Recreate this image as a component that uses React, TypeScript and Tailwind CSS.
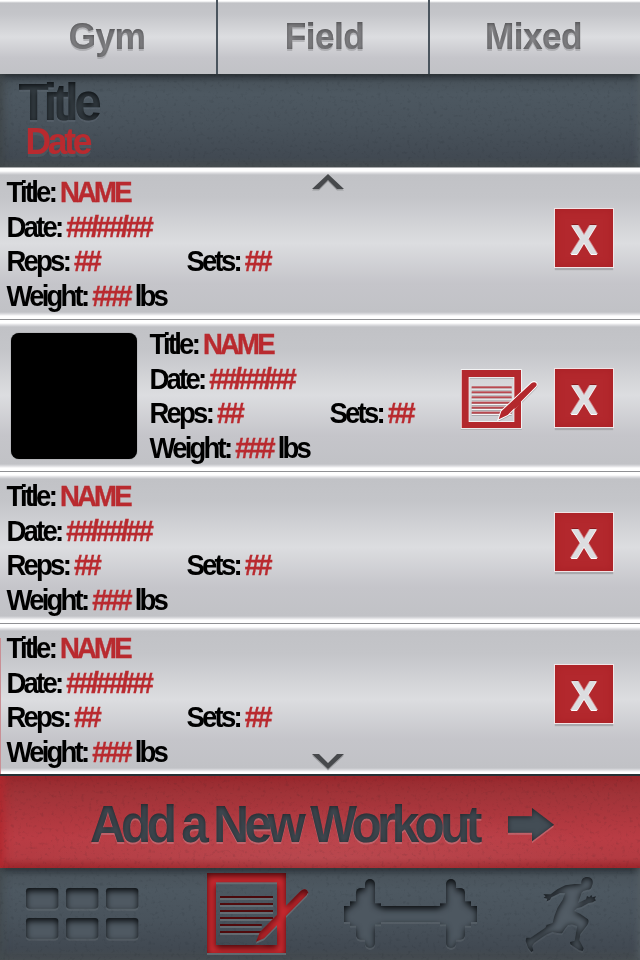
import React from "react";

type InsetProps = {
  id: string;
  dy: number;
  blur: number;
  shade: string;
  strength: number;
  light: string;
  lightAlpha: number;
};

// Pressed-in look: dark shade inside the upper edge, thin light lip below.
function Inset({ id, dy, blur, shade, strength, light, lightAlpha }: InsetProps) {
  return (
    <filter id={id} x="-10%" y="-10%" width="120%" height="125%" colorInterpolationFilters="sRGB">
      <feComponentTransfer in="SourceAlpha" result="inv">
        <feFuncA type="table" tableValues="1 0" />
      </feComponentTransfer>
      <feGaussianBlur in="inv" stdDeviation={blur} result="b" />
      <feOffset in="b" dy={dy} result="o" />
      <feFlood floodColor={shade} floodOpacity={strength} />
      <feComposite in2="o" operator="in" />
      <feComposite in2="SourceAlpha" operator="in" result="inner" />
      <feOffset in="SourceAlpha" dy="2" result="lo" />
      <feFlood floodColor={light} floodOpacity={lightAlpha} />
      <feComposite in2="lo" operator="in" result="lip" />
      <feMerge>
        <feMergeNode in="lip" />
        <feMergeNode in="SourceGraphic" />
        <feMergeNode in="inner" />
      </feMerge>
    </filter>
  );
}

function Filters() {
  return (
    <svg className="absolute h-0 w-0">
      <defs>
        <Inset id="press" dy={3} blur={3} shade="#0a0d10" strength={1} light="#7d8489" lightAlpha={0.25} />
        <Inset id="press-runner" dy={1} blur={3} shade="#0a0d10" strength={1} light="#7d8489" lightAlpha={0.15} />
        <Inset id="press-red" dy={3} blur={3} shade="#3a0508" strength={0.9} light="#6f777c" lightAlpha={0.7} />
        <Inset id="press-tab" dy={1} blur={2} shade="#3c3c3e" strength={0.85} light="#8f9093" lightAlpha={0.5} />
        <Inset id="press-title" dy={2} blur={2.5} shade="#0c1013" strength={1} light="#66707a" lightAlpha={0.35} />
        <Inset id="press-add" dy={1} blur={2.5} shade="#1c2024" strength={0.85} light="#c9858c" lightAlpha={0.5} />
      </defs>
    </svg>
  );
}

function Grain({ id }: { id: string }) {
  return (
    <svg className="pointer-events-none absolute inset-0 h-full w-full">
      <filter id={id} x="0" y="0" width="100%" height="100%" colorInterpolationFilters="sRGB">
        <feTurbulence type="fractalNoise" baseFrequency="0.27" numOctaves="4" seed="8" />
        <feColorMatrix values="0 0 0 0 0.08  0 0 0 0 0.1  0 0 0 0 0.12  0 0 0 4 -2.3" />
      </filter>
      <rect width="100%" height="100%" filter={`url(#${id})`} opacity="0.09" />
    </svg>
  );
}

function Tab({ children, last, nudge }: { children: string; last?: boolean; nudge: string }) {
  return (
    <button
      className={`flex h-full items-center justify-center text-[35.3px] leading-[72px] tracking-[-0.6px] text-[#8b8b8e] ${
        last ? "" : "border-r-2 border-[#4a545d]"
      }`}
    >
      <span className={`-mt-[3px] scale-y-[1.05] font-bold [filter:url(#press-tab)] ${nudge}`}>{children}</span>
    </button>
  );
}

function Red({ children }: { children: string }) {
  return <span className="text-[#b92a2f] [-webkit-text-stroke:0.35px_#b92a2f]">{children}</span>;
}

function DeleteButton({ low }: { low?: boolean }) {
  return (
    <button
      className={`ml-[19px] mr-[27px] flex h-[58px] w-[58px] shrink-0 items-center justify-center bg-[#b3282d] text-[40.5px] font-bold leading-none text-[#dcdde0] shadow-[0_0_0_1px_#f1e4e6,0_3px_1px_#a9a9ad,inset_0_0_8px_#a82025] ${
        low ? "mt-[49px]" : "mt-[41px]"
      }`}
    >
      <span className="mt-[2px] scale-y-[1.07] [text-shadow:0_1px_0_#fff,-1px_0_0_#d58c90,1px_0_0_#d58c90,0_-1px_0_#8c181d]">X</span>
    </button>
  );
}

function EditIcon() {
  const lines = [107, 122, 137, 153, 168, 183];
  return (
    <svg viewBox="60 52 240 192" className="mt-[47.5px] h-[64px] w-[80px] shrink-0 [filter:drop-shadow(0_1px_0_#aaaaae)]">
      <path d="M65 58H243V232H65ZM86 79V214H223V79Z" fill="#b3282d" fillRule="evenodd" stroke="#fff" strokeWidth="5" paintOrder="stroke" />
      {lines.map((y) => (
        <g key={y}>
          <rect x="95" y={y} width="120" height="6" fill="#b94950" />
          <rect x="95" y={y + 7} width="120" height="3" fill="#f4f4f6" />
        </g>
      ))}
      <path d="M176 206L184 182L274 98Q283 91 289 98Q292 104 286 109L203 193Z" fill="#b3282d" stroke="#fff" strokeWidth="6" paintOrder="stroke" />
      <path d="M223 148L243 128V160L223 176Z" fill="#b3282d" />
    </svg>
  );
}

function WorkoutRow({ picture }: { picture?: boolean }) {
  return (
    <div className="flex h-[152px] items-start border-b border-[#8f9093] bg-[linear-gradient(to_bottom,#fff_0px,#fff_3px,#dcdcdf_5px,#c1c2c6_7px,#c4c5c9_30px,#dcdde0_75px,#c5c5ca_115px,#c1c2c6_144px,#dcdcdf_146px,#fff_148px,#fff_151px)]">
      {picture && (
        <div className="ml-[11px] mt-[13px] h-[126px] w-[126px] shrink-0 rounded-[8px] bg-black shadow-[0_0_1px_#555]" />
      )}
      <div
        className={`mt-[7px] origin-top scale-y-[1.045] whitespace-nowrap text-[27.5px] font-bold leading-[33.1px] tracking-[-2.78px] text-black ${
          picture ? "ml-[12.5px]" : "ml-[6.5px]"
        }`}
      >
        <div>Title: <Red>NAME</Red></div>
        <div>Date: <Red>##/##/##</Red></div>
        <div className="flex">
          <div className="w-[180px]">Reps: <Red>##</Red></div>
          <div>Sets: <Red>##</Red></div>
        </div>
        <div>Weight: <Red>###</Red> lbs</div>
      </div>
      <div className="flex flex-1 items-start justify-end">
        {picture && <EditIcon />}
        <div className={picture ? "-ml-[4px]" : ""}>
          <DeleteButton low={picture} />
        </div>
      </div>
    </div>
  );
}

function GridIcon() {
  const cells = [
    [78, 69], [198, 69], [318, 69],
    [78, 159], [198, 159], [318, 159],
  ];
  return (
    <svg viewBox="0 9 480 276" className="h-[92px] w-[160px] [filter:url(#press)]">
      {cells.map(([x, y]) => (
        <rect key={`${x}-${y}`} x={x} y={y} width="97" height="62" rx="10" fill="#4f5962" />
      ))}
    </svg>
  );
}

function LogIcon() {
  const lines = [93, 114, 135, 156, 177, 198];
  return (
    <svg viewBox="0 9 420 276" className="ml-[30px] h-[92px] w-[140px] [filter:url(#press-red)]">
      <path d="M51 24H288V264H51ZM78 52V240H261V52Z" fill="#c9292f" fillRule="evenodd" />
      {lines.map((y, i) => (
        <rect key={y} x="90" y={y} width={i < 4 ? 159 : 125} height="6" fill="#7a1519" />
      ))}
      <path d="M198 230L210 201L332 78Q343 68 351 76L354 82L350 90L222 220Z" fill="#c9292f" />
    </svg>
  );
}

function BarbellIcon() {
  return (
    <svg viewBox="0 9 480 276" className="h-[92px] w-[160px] [filter:url(#press)]">
      <g fill="#4d5760">
        <rect x="42" y="123" width="399" height="48" />
        <rect x="60" y="109" width="30" height="73" />
        <rect x="78" y="69" width="50" height="155" rx="14" />
        <rect x="105" y="42" width="30" height="207" rx="15" />
        <rect x="120" y="115" width="33" height="63" />
        <rect x="330" y="115" width="33" height="63" />
        <rect x="348" y="42" width="30" height="207" rx="15" />
        <rect x="355" y="69" width="50" height="155" rx="14" />
        <rect x="393" y="109" width="30" height="73" />
      </g>
    </svg>
  );
}

function RunnerIcon() {
  return (
    <svg viewBox="0 9 420 276" className="ml-[10px] h-[92px] w-[140px] [filter:url(#press-runner)]">
      <path
        fill="#525c65"
        d="M244 57C242 42 252 35 263 36C276 37 280 47 278 56L274 68Q270 76 261 74L250 78Q243 82 242 92L234 114L258 103L261 93L268 97L274 90L277 97L288 94L284 101L288 106L278 112L266 114L244 126L230 130L222 138L240 146L264 163Q268 170 262 180L241 207L238 226L251 250L248 258L238 256L211 238L210 231L224 227L228 204L232 183L216 178L204 180L196 190L186 205L172 204L158 200L138 209L120 221L102 234L97 243L100 257L94 261L84 248L77 228L79 218L92 218L104 210L136 188L140 180L158 174L163 154L172 130L188 104L196 84L180 84L154 97L150 104L140 109L142 101L131 98L137 94L130 88L152 88L172 73L196 61L224 57Z"
      />
    </svg>
  );
}

function Chevron({ down, className }: { down?: boolean; className: string }) {
  const d = down ? "M0 0H7L16 9L25 0H32L16 15Z" : "M0 15H7L16 6L25 15H32L16 0Z";
  return (
    <svg viewBox="0 0 32 17" className={`pointer-events-none absolute left-[312px] h-[17px] w-[32px] ${className}`}>
      <path d={d} fill="#9c9da0" transform="translate(0 1.6)" />
      <path d={d} fill="#47494c" />
    </svg>
  );
}

export default function App() {
  return (
    <div className="relative flex h-[960px] w-[640px] flex-col overflow-hidden bg-[#4a545d] font-['Liberation_Sans',Arial,sans-serif]">
      <Filters />
      <header className="grid h-[74px] shrink-0 grid-cols-[218px_212px_210px] bg-[linear-gradient(to_bottom,#fff_0px,#fff_1px,#c1c2c6_3px,#c4c5c9_14px,#dcdde0_37px,#c5c5ca_58px,#c1c2c6_74px)]">
        <Tab nudge="mr-[2px]">Gym</Tab>
        <Tab nudge="ml-[3px]">Field</Tab>
        <Tab nudge="mr-[3px]" last>Mixed</Tab>
      </header>

      <section className="relative h-[94px] shrink-0 border-b border-[#a9abad] bg-[linear-gradient(to_bottom,#20262a_0px,#3a434a_4px,#49535b_9px,#4d5861_20px,#49535c_50px,#414952_84px,#474d4f_93px)] font-bold shadow-[inset_7px_0_8px_-4px_#3f4649,inset_-5px_0_7px_-3px_#545d63]">
        <Grain id="grain-head" />
        <h1 className="h-[50px] pl-[18.5px] text-[49.5px] leading-[55px] tracking-[-4.4px] text-[#343c42]">
          <span className="inline-block scale-y-[1.04] pr-2 [filter:url(#press-title)]">Title</span>
        </h1>
        <p className="scale-y-[1.04] pl-[25.5px] text-[35.5px] leading-[36px] tracking-[-3.3px] text-[#b92a2f] [text-shadow:0_2px_0_#56616980]">Date</p>
      </section>

      <main className="relative h-[606px] shrink-0 overflow-hidden">
        <WorkoutRow />
        <WorkoutRow picture />
        <WorkoutRow />
        <WorkoutRow />
        <Chevron className="top-[6px]" />
        <Chevron down className="bottom-[3px]" />
        <div className="absolute bottom-0 left-0 h-[136px] w-px bg-[#c98f95]" />
      </main>

      <button className="relative flex h-[94px] shrink-0 items-center border-t-2 border-[#253135] bg-[radial-gradient(ellipse_300px_60px_at_50%_95%,#ffffff12,transparent),linear-gradient(to_bottom,#97282d_0px,#a03338_18px,#b0383f_44px,#b93c44_62px,#b33b42_82px,#9c262c_92px)] pl-[90px] shadow-[inset_9px_0_9px_-5px_#b2282e]">
        <Grain id="grain-add" />
        <span className="mt-[4px] scale-y-[1.04] whitespace-nowrap pr-2 text-[49.5px] font-bold leading-[60px] tracking-[-4.65px] text-[#3f4850] [filter:url(#press-add)]">
          Add a New Workout
        </span>
        <svg viewBox="564 200 138 108" className="absolute left-[508px] top-[31px] h-[36px] w-[46px] [filter:url(#press-add)]">
          <path d="M564 228H636V203L702 253L636 303V277H564Z" fill="#434d55" />
        </svg>
      </button>

      <nav className="relative flex h-[92px] shrink-0 bg-[linear-gradient(to_bottom,#262c30_0px,#3c454c_4px,#4a545c_9px,#4d5861_22px,#49535c_50px,#414952_80px,#454b4e_92px)] shadow-[inset_7px_0_8px_-4px_#434b4f,inset_-5px_0_7px_-3px_#545d63]">
        <Grain id="grain-nav" />
        <GridIcon />
        <LogIcon />
        <BarbellIcon />
        <RunnerIcon />
      </nav>
    </div>
  );
}
